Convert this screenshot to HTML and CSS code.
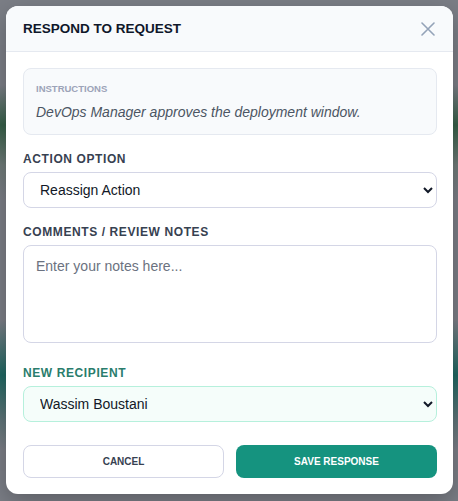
FILE: index.html
```html
<!DOCTYPE html>
<html lang="en">
<head>
  <meta charset="UTF-8">
  <meta name="viewport" content="width=device-width, initial-scale=1.0">
  <title>Respond to Request</title>
  <link rel="stylesheet" href="styles.css">
</head>
<body>

  <!-- Response dialog over the dimmed page -->
  <div class="modal">
    <div class="modal-header">
      <h2 class="modal-title">RESPOND TO REQUEST</h2>
      <button class="close-btn" aria-label="Close">
        <svg width="14" height="14" viewBox="0 0 14 14">
          <path d="M1 1 L13 13 M13 1 L1 13" stroke="currentColor" stroke-width="1.6" stroke-linecap="round" fill="none"/>
        </svg>
      </button>
    </div>

    <div class="modal-body">
      <div class="instructions">
        <span class="instructions-label">INSTRUCTIONS</span>
        <p class="instructions-text">DevOps Manager approves the deployment window.</p>
      </div>

      <label class="field">
        <span class="field-label">ACTION OPTION</span>
        <select class="field-input">
          <option>Reassign Action</option>
          <option>Approve</option>
          <option>Reject</option>
        </select>
      </label>

      <label class="field">
        <span class="field-label">COMMENTS / REVIEW NOTES</span>
        <textarea class="field-input notes" placeholder="Enter your notes here..."></textarea>
      </label>

      <label class="field recipient">
        <span class="field-label">NEW RECIPIENT</span>
        <select class="field-input">
          <option>Wassim Boustani</option>
        </select>
      </label>

      <div class="actions">
        <button class="btn btn-cancel">CANCEL</button>
        <button class="btn btn-save">SAVE RESPONSE</button>
      </div>
    </div>
  </div>

</body>
</html>
```

FILE: styles.css
```css
* {
  box-sizing: border-box;
}

html, body {
  height: 100%;
}

body {
  margin: 0;
  padding: 6px 5px 0 6px;
  font-family: "Liberation Sans", Arial, sans-serif;
  color: #1e293b;
  background: linear-gradient(180deg,
    #7b7e86 0px,
    #7b7e86 85px,
    #365f48 125px,
    #6f7a78 165px,
    #7b7e86 200px,
    #7b7e86 320px,
    #1f6762 375px,
    #5f7478 420px,
    #7b7e86 450px);
}

.modal {
  width: 447px;
  background: #fff;
  border-radius: 12px;
  overflow: hidden;
  box-shadow: 0 8px 24px rgba(0, 0, 0, 0.25);
}

.modal-header {
  display: flex;
  align-items: center;
  justify-content: space-between;
  height: 46px;
  padding: 0 18px 0 17px;
  background: #f8fafc;
  border-bottom: 1px solid #e5e9f0;
}

.modal-title {
  margin: 0;
  font-size: 13.5px;
  font-weight: bold;
  color: #0f172a;
  letter-spacing: 0;
}

.close-btn {
  display: flex;
  padding: 0;
  border: 0;
  background: none;
  color: #94a3b8;
}

.modal-body {
  display: flex;
  flex-direction: column;
  padding: 16px 16px 16px 17px;
}

.instructions {
  height: 67px;
  padding: 14px 12px;
  background: #f8fafc;
  border: 1px solid #e5e9f0;
  border-radius: 8px;
}

.instructions-label {
  display: block;
  font-size: 9.5px;
  font-weight: bold;
  color: #9ca3b8;
}

.instructions-text {
  margin: 10px 0 0;
  font-size: 14px;
  font-style: italic;
  color: #4b5563;
}

.field {
  display: flex;
  flex-direction: column;
  gap: 6px;
  margin-top: 17px;
}

.field-label {
  font-size: 12px;
  font-weight: bold;
  line-height: 14px;
  letter-spacing: 0.6px;
  color: #374151;
}

.field-input {
  width: 100%;
  height: 36px;
  padding: 0 12px;
  font-family: inherit;
  font-size: 14px;
  color: #111827;
  background: #fff;
  border: 1px solid #d4d6e6;
  border-radius: 8px;
}

.notes {
  height: 98px;
  padding: 12px;
  resize: none;
}

.notes::placeholder {
  color: #6b7280;
}

.recipient {
  margin-top: 23px;
}

.recipient .field-label {
  color: #2a7d6c;
}

.recipient .field-input {
  background: #f5fdfa;
  border-color: #b6f0dc;
}

.actions {
  display: grid;
  grid-template-columns: 1fr 1fr;
  gap: 12px;
  margin-top: 23px;
}

.btn {
  height: 33px;
  font-family: inherit;
  font-size: 10px;
  font-weight: bold;
  border-radius: 8px;
}

.btn-cancel {
  color: #374151;
  background: #fff;
  border: 1px solid #d4d6e6;
}

.btn-save {
  color: #fff;
  background: #15937f;
  border: 0;
}
```
